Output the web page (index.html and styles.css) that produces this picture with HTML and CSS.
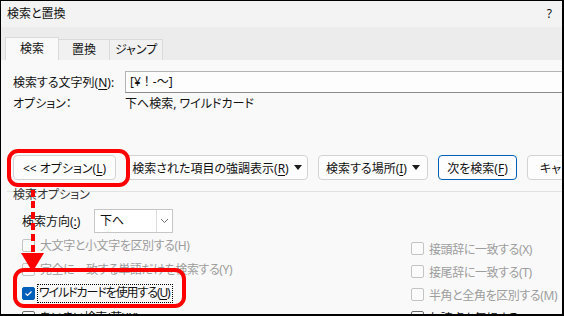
FILE: index.html
```html
<!DOCTYPE html>
<html lang="ja">
<head>
  <meta charset="UTF-8">
  <meta name="viewport" content="width=device-width, initial-scale=1.0">
  <title>検索と置換</title>
  <link rel="stylesheet" href="styles.css">
</head>
<body>

<div class="window">
  <div class="titlebar">
    <span>検索と置換</span>
    <span class="help">?</span>
  </div>

  <div class="tabstrip">
    <div class="tab active">検索</div>
    <div class="tab">置換</div>
    <div class="tab">ジャンプ</div>
  </div>

  <div class="content">
    <div class="find-row">
      <label class="find-label">検索する文字列(<u>N</u>):</label>
      <div class="find-input">[¥！-～]</div>
    </div>
    <div class="option-row">
      <span class="find-label">オプション：</span>
      <span>下へ検索, ワイルドカード</span>
    </div>

    <div class="buttons">
      <button class="btn btn-options"><span>&lt;&lt; オプション(<u>L</u>)</span></button>
      <button class="btn btn-highlight"><span>検索された項目の強調表示(<u>R</u>)</span><span class="caret"></span></button>
      <button class="btn btn-where"><span>検索する場所(<u>I</u>)</span><span class="caret"></span></button>
      <button class="btn btn-next"><span>次を検索(<u>F</u>)</span></button>
      <button class="btn btn-cancel"><span>キャンセル</span></button>
    </div>

    <div class="group-title">検索オプション</div>

    <div class="options">
      <div class="col-left">
        <div class="dir-row">
          <span class="dir-label">検索方向(<u>:</u>)</span>
          <div class="select">
            <span class="select-value">下へ</span>
            <span class="select-btn">
              <svg width="9" height="6" viewBox="0 0 9 6"><polyline points="1,1 4.5,4.5 8,1" fill="none" stroke="#707070" stroke-width="1"/></svg>
            </span>
          </div>
        </div>
        <div class="check disabled"><span class="box"></span><span>大文字と小文字を区別する(H)</span></div>
        <div class="check disabled"><span class="box"></span><span>完全に一致する単語だけを検索する(Y)</span></div>
        <div class="check checked">
          <span class="box">
            <svg width="9" height="7" viewBox="0 0 9 7"><polyline points="1.5,3.5 3.5,5.5 7.5,1.5" fill="none" stroke="#fff" stroke-width="1.2"/></svg>
          </span>
          <span class="focus">ワイルドカードを使用する(<u>U</u>)</span>
        </div>
        <div class="check"><span class="box"></span><span>あいまい検索(英)(K)</span></div>
      </div>
      <div class="col-right">
        <div class="check disabled"><span class="box"></span><span>接頭辞に一致する(X)</span></div>
        <div class="check disabled"><span class="box"></span><span>接尾辞に一致する(T)</span></div>
        <div class="check disabled"><span class="box"></span><span>半角と全角を区別する(M)</span></div>
        <div class="check"><span class="box"></span><span>句読点を無視する(S)</span></div>
      </div>
    </div>
  </div>

  <!-- red annotations -->
  <svg class="marks" width="564" height="316" viewBox="0 0 564 316">
    <rect x="9" y="151" width="119" height="34" rx="9" fill="none" stroke="#ff0000" stroke-width="4"/>
    <line x1="33" y1="190" x2="33" y2="254" stroke="#ff0000" stroke-width="4" stroke-dasharray="7 4"/>
    <polygon points="21,253 44,253 32.5,272" fill="#ff0000"/>
    <rect x="15" y="270" width="169" height="36" rx="9" fill="none" stroke="#ff0000" stroke-width="4"/>
  </svg>
</div>

</body>
</html>
```

FILE: styles.css
```css
body {
  margin: 0;
}

.window {
  position: relative;
  box-sizing: border-box;
  width: 564px;
  height: 316px;
  overflow: hidden;
  border: 1px solid #000;
  border-right-width: 2px;
  border-bottom-width: 2px;
  background: #f9f9f9;
  font-family: "Noto Sans", "Noto Sans CJK JP", sans-serif;
  font-size: 12px;
  font-feature-settings: "palt";
  color: #111;
}

u {
  text-decoration-thickness: 1px;
  text-underline-offset: 2px;
}

.titlebar {
  height: 26px;
  display: flex;
  align-items: center;
  justify-content: space-between;
  padding: 0 10px 0 6px;
  background: #f3f3f3;
  line-height: 14px;
}

.tabstrip {
  height: 33px;
  display: flex;
  align-items: flex-end;
  padding-left: 4px;
  background: #ececec;
}

.tab {
  box-sizing: border-box;
  height: 21px;
  display: flex;
  align-items: center;
  justify-content: center;
  border: 1px solid #dadada;
  border-bottom: none;
  border-left: none;
  background: #f1f1f1;
  line-height: 14px;
}

.tab:nth-child(2) {
  width: 51px;
}

.tab:nth-child(3) {
  width: 53px;
}

.tab.active {
  width: 54px;
  height: 23px;
  border-left: 1px solid #dadada;
  background: #f9f9f9;
}

.content {
  padding: 11px 0 0 12px;
}

.find-row {
  display: flex;
  align-items: center;
  height: 22px;
  white-space: nowrap;
}

.find-label {
  width: 112px;
  flex: none;
}

.find-input {
  box-sizing: border-box;
  width: 460px;
  height: 22px;
  flex: none;
  padding: 0 4px;
  border: 1px solid #b4b4b4;
  border-bottom-color: #8a8a8a;
  background: #fdfdfd;
  line-height: 20px;
  font-feature-settings: normal;
}

.option-row {
  display: flex;
  margin-top: 4px;
  height: 14px;
  line-height: 14px;
  white-space: nowrap;
}

.buttons {
  display: flex;
  gap: 10px;
  margin-top: 44px;
  padding-bottom: 11px;
  margin-left: -6px;
  padding-left: 6px;
  border-bottom: 1px solid #e2e2e2;
}

.btn {
  box-sizing: border-box;
  flex: none;
  height: 25px;
  display: flex;
  align-items: center;
  justify-content: center;
  gap: 5px;
  padding: 0;
  border: 1px solid #d3d3d3;
  border-radius: 4px;
  background: #fdfdfd;
  font: inherit;
  color: #111;
  white-space: nowrap;
}

.btn-options {
  width: 103px;
}

.btn-highlight {
  width: 182px;
}

.btn-where {
  width: 110px;
}

.btn-next {
  width: 79px;
  border-color: #005fb8;
}

.btn-cancel {
  width: 79px;
  justify-content: flex-start;
  padding-left: 12px;
}

.caret {
  width: 0;
  height: 0;
  border-left: 4px solid transparent;
  border-right: 4px solid transparent;
  border-top: 5px solid #1a1a1a;
}

.group-title {
  margin-top: -3px;
  height: 12px;
  line-height: 12px;
  color: #333;
}

.options {
  display: flex;
  margin-top: 8px;
  padding-left: 9px;
  white-space: nowrap;
}

.col-left {
  width: 389px;
  flex: none;
}

.col-right {
  padding-top: 28px;
}

.col-right .check {
  height: 23px;
}

.dir-row {
  display: flex;
  align-items: center;
  height: 24px;
}

.dir-label {
  width: 72px;
}

.select {
  box-sizing: border-box;
  width: 79px;
  height: 24px;
  display: flex;
  border: 1px solid #c6c6c6;
  background: #fff;
}

.select-value {
  flex: 1;
  padding-left: 5px;
  line-height: 22px;
}

.select-btn {
  width: 15px;
  display: flex;
  align-items: center;
  justify-content: center;
  border-left: 1px solid #dcdcdc;
}

.check {
  display: flex;
  align-items: center;
  gap: 5px;
  height: 24px;
  letter-spacing: -0.4px;
}

.box {
  box-sizing: border-box;
  width: 13px;
  height: 13px;
  flex: none;
  display: flex;
  align-items: center;
  justify-content: center;
  border: 1px solid #6b6b6b;
  border-radius: 2px;
  background: #fbfbfb;
}

.check.disabled {
  color: #9d9d9d;
}

.check.disabled .box {
  border-color: #c4c4c4;
}

.check.checked {
  gap: 2px;
  letter-spacing: -1.1px;
}

.check.checked .box {
  border-color: #005fb8;
  background: #005fb8;
}

.focus {
  padding: 1px 2px 2px 1px;
  border: 1px dotted #000;
  line-height: 14px;
}

.marks {
  position: absolute;
  top: -1px;
  left: -1px;
  pointer-events: none;
}
```
